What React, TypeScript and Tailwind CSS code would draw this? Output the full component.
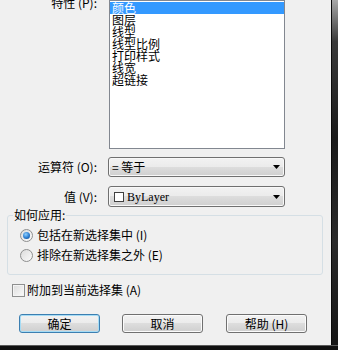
import { ReactNode } from 'react';

const listItems = ['颜色', '图层', '线型', '线型比例', '打印样式', '线宽', '超链接'];

const winBg =
  'bg-[linear-gradient(#f2f2f2,#ebebeb_50%,#dddddd_50%,#cfcfcf)]';

function ComboBox({ children, height }: { children: ReactNode; height: string }) {
  return (
    <div
      className={`ml-[11px] w-[177px] ${height} flex items-center justify-between rounded-[3px] border border-[#707070] ${winBg} shadow-[inset_0_0_0_1px_#f8f8f8] pl-[3px] pr-[4px]`}
    >
      <div className="flex items-center">{children}</div>
      <svg width="7" height="4" viewBox="0 0 7 4">
        <polygon points="0,0 7,0 3.5,4" fill="#000" />
      </svg>
    </div>
  );
}

function Radio({ checked }: { checked?: boolean }) {
  return (
    <span className="w-[13px] h-[13px] rounded-full border border-[#8e8f8f] bg-[linear-gradient(135deg,#dcdcdc,#fbfbfb)] flex items-center justify-center shrink-0">
      {checked && (
        <span className="w-[7px] h-[7px] rounded-full bg-[radial-gradient(circle_at_40%_35%,#8ed0ff,#2a7cd0_55%,#0c3f7a)]" />
      )}
    </span>
  );
}

function Button({ label, primary }: { label: string; primary?: boolean }) {
  return (
    <button
      className={`w-[81px] h-[19px] rounded-[3px] border ${winBg} flex items-center justify-center text-[12px] leading-[14px] text-black ${
        primary
          ? 'border-[#3c7fb1] shadow-[inset_0_0_0_1px_#a6dcf5]'
          : 'border-[#707070] shadow-[inset_0_0_0_1px_#fbfbfb]'
      }`}
    >
      {label}
    </button>
  );
}

export default function App() {
  return (
    <div
      className="w-[338px] h-[350px] overflow-hidden bg-black text-[12px] text-black"
      style={{ fontFamily: '"Noto Sans CJK SC", "Noto Sans", sans-serif' }}
    >
      <div className="flex h-[345px]">
        <div className="w-[331px] bg-[#f0f0f0] flex flex-col">
          {/* Properties list */}
          <div className="flex items-start">
            <div className="w-[97px] text-right leading-[16px] -mt-[5px]">特性 (P):</div>
            <div className="ml-[12px] w-[176px] h-[149px] border border-[#828790] bg-white pt-px">
              {listItems.map((item, idx) => (
                <div
                  key={item}
                  className={`h-[12px] leading-[12px] pl-[2px] ${idx === 0 ? 'bg-[#3399ff] text-white' : ''}`}
                >
                  {item}
                </div>
              ))}
            </div>
          </div>

          {/* Operator */}
          <div className="flex items-center mt-[8px]">
            <div className="w-[97px] text-right leading-[16px]">运算符 (O):</div>
            <ComboBox height="h-[20px]">
              <span className="leading-[16px]">= 等于</span>
            </ComboBox>
          </div>

          {/* Value */}
          <div className="flex items-center mt-[9px]">
            <div className="w-[97px] text-right leading-[16px]">值 (V):</div>
            <ComboBox height="h-[21px]">
              <span className="ml-[2px] w-[10px] h-[10px] border border-[#404040] bg-white" />
              <span
                className="ml-[3px] leading-[16px]"
                style={{ fontFamily: '"Liberation Serif", serif' }}
              >
                ByLayer
              </span>
            </ComboBox>
          </div>

          {/* How to apply */}
          <fieldset className="mt-px ml-[7px] w-[316px] border border-[#d5dfe5] rounded-[3px] pb-[9px]">
            <legend className="ml-[5px] px-px leading-[14px]">如何应用:</legend>
            <div className="flex items-center h-[20px] mt-[3px] pl-[12px]">
              <Radio checked />
              <span className="ml-[4px] leading-[16px]">包括在新选择集中 (I)</span>
            </div>
            <div className="flex items-center h-[20px] pl-[12px]">
              <Radio />
              <span className="ml-[4px] leading-[16px]">排除在新选择集之外 (E)</span>
            </div>
          </fieldset>

          {/* Append */}
          <div className="flex items-center h-[20px] mt-[5px] pl-[12px]">
            <span className="w-[13px] h-[13px] border border-[#8e8f8f] bg-[linear-gradient(135deg,#dcdcdc,#fbfbfb)] shadow-[inset_0_0_0_1px_#f4f4f4]" />
            <span className="ml-[2px] leading-[16px]">附加到当前选择集 (A)</span>
          </div>

          {/* Buttons */}
          <div className="flex mt-[14px] pl-[19px]">
            <Button label="确定" primary />
            <div className="ml-[22px]">
              <Button label="取消" />
            </div>
            <div className="ml-[23px]">
              <Button label="帮助 (H)" />
            </div>
          </div>
        </div>
        <div className="w-[7px] border-l border-[#0a0a0a] bg-[linear-gradient(#a8a8a8,#3a3a3a_12%,#1a1a1a_40%,#2a2a2a_70%,#151515)]" />
      </div>
      <div className="h-[5px] border-t border-[#5a5a5a] bg-[#101010]" />
    </div>
  );
}
